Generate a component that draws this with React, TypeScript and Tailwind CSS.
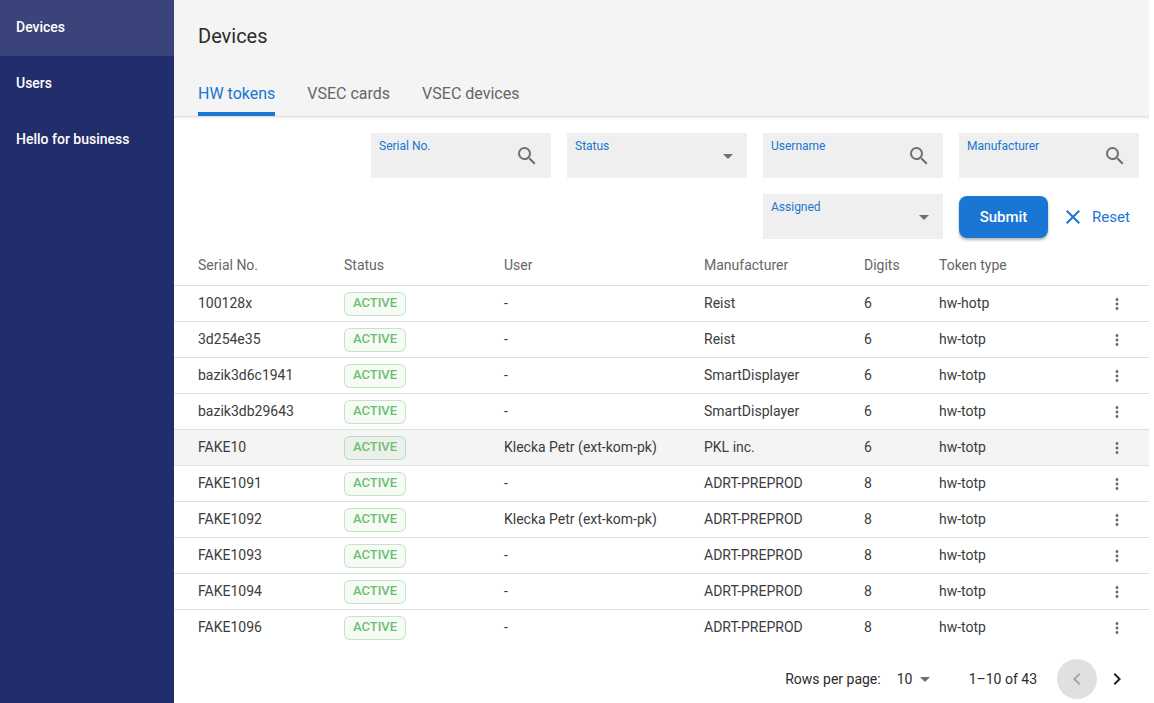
import { MdArrowDropDown, MdChevronLeft, MdChevronRight, MdClose, MdMoreVert, MdSearch } from 'react-icons/md';

type Token = {
  serial: string;
  user: string;
  manufacturer: string;
  digits: number;
  type: string;
};

const tokens: Token[] = [
  { serial: '100128x', user: '-', manufacturer: 'Reist', digits: 6, type: 'hw-hotp' },
  { serial: '3d254e35', user: '-', manufacturer: 'Reist', digits: 6, type: 'hw-totp' },
  { serial: 'bazik3d6c1941', user: '-', manufacturer: 'SmartDisplayer', digits: 6, type: 'hw-totp' },
  { serial: 'bazik3db29643', user: '-', manufacturer: 'SmartDisplayer', digits: 6, type: 'hw-totp' },
  { serial: 'FAKE10', user: 'Klecka Petr (ext-kom-pk)', manufacturer: 'PKL inc.', digits: 6, type: 'hw-totp' },
  { serial: 'FAKE1091', user: '-', manufacturer: 'ADRT-PREPROD', digits: 8, type: 'hw-totp' },
  { serial: 'FAKE1092', user: 'Klecka Petr (ext-kom-pk)', manufacturer: 'ADRT-PREPROD', digits: 8, type: 'hw-totp' },
  { serial: 'FAKE1093', user: '-', manufacturer: 'ADRT-PREPROD', digits: 8, type: 'hw-totp' },
  { serial: 'FAKE1094', user: '-', manufacturer: 'ADRT-PREPROD', digits: 8, type: 'hw-totp' },
  { serial: 'FAKE1096', user: '-', manufacturer: 'ADRT-PREPROD', digits: 8, type: 'hw-totp' },
];

const highlightedSerial = 'FAKE10';

const navItems = ['Devices', 'Users', 'Hello for business'];
const tabs = ['HW tokens', 'VSEC cards', 'VSEC devices'];

function Sidebar() {
  return (
    <nav className="w-[174px] shrink-0 bg-[#222d6b] text-sm font-medium text-white">
      <ul>
        {navItems.map((item, i) => (
          <li key={item}>
            <a href="#" className={`flex h-14 items-center px-4 pb-0.5 ${i === 0 ? 'bg-[#3a437a]' : ''}`}>
              {item}
            </a>
          </li>
        ))}
      </ul>
    </nav>
  );
}

function SearchField({ id, label }: { id: string; label: string }) {
  return (
    <div className="flex h-[45px] w-[180px] items-center bg-[#efefef] pr-3 pl-2">
      <div className="flex h-full min-w-0 flex-1 flex-col pt-1">
        <label htmlFor={id} className="text-xs leading-[18px] text-[#1976d2]">
          {label}
        </label>
        <input id={id} type="text" className="h-5 w-full bg-transparent text-sm outline-none" />
      </div>
      <button type="button" aria-label={`Search ${label}`} className="text-[#6f6f6f]">
        <MdSearch size={24} />
      </button>
    </div>
  );
}

function SelectField({ id, label }: { id: string; label: string }) {
  return (
    <div className="relative flex h-[45px] w-[180px] flex-col bg-[#efefef] px-2 pt-1">
      <label htmlFor={id} className="text-xs leading-[18px] text-[#1976d2]">
        {label}
      </label>
      <select id={id} defaultValue="" className="h-5 w-full appearance-none bg-transparent text-sm outline-none">
        <option value="" />
      </select>
      <MdArrowDropDown size={24} className="pointer-events-none absolute top-[11px] right-[7px] text-[#6f6f6f]" />
    </div>
  );
}

function Filters() {
  return (
    <form className="flex flex-wrap justify-end gap-4 px-2.5 pt-3.5 pb-[7px]" onSubmit={(e) => e.preventDefault()}>
      <SearchField id="serial" label="Serial No." />
      <SelectField id="status" label="Status" />
      <SearchField id="username" label="Username" />
      <SearchField id="manufacturer" label="Manufacturer" />
      <SelectField id="assigned" label="Assigned" />
      <div className="flex w-[180px] items-center gap-[13px]">
        <button
          type="submit"
          className="h-[42px] w-[89px] shrink-0 rounded-lg bg-[#1976d2] pt-0.5 text-[15px] font-medium text-white shadow-[0_2px_3px_rgba(0,0,0,0.3)]"
        >
          Submit
        </button>
        <button type="button" className="flex items-center gap-[7px] text-[15px] text-[#1976d2]">
          <MdClose size={24} />
          <span className="pt-0.5">Reset</span>
        </button>
      </div>
    </form>
  );
}

function TokenTable() {
  return (
    <table className="w-full table-fixed border-collapse text-sm text-[#3c3c3c]">
      <colgroup>
        <col className="w-[162px]" />
        <col className="w-[160px]" />
        <col className="w-[200px]" />
        <col className="w-[160px]" />
        <col className="w-[75px]" />
        <col />
        <col className="w-[65px]" />
      </colgroup>
      <thead>
        <tr className="h-[39px] border-b border-[#dfdfdf] text-left text-[#666666]">
          <th className="pl-6 font-normal">Serial No.</th>
          <th className="pl-2 font-normal">Status</th>
          <th className="pl-2 font-normal">User</th>
          <th className="pl-2 font-normal">Manufacturer</th>
          <th className="pl-2 font-normal">Digits</th>
          <th className="pl-2 font-normal">Token type</th>
          <th aria-label="Actions" />
        </tr>
      </thead>
      <tbody>
        {tokens.map((t) => (
          <tr
            key={t.serial}
            className={`h-9 border-b border-[#dfdfdf] last:border-b-0 ${t.serial === highlightedSerial ? 'bg-[#f4f4f4]' : ''}`}
          >
            <td className="pl-6">{t.serial}</td>
            <td className="pt-0.5 pl-2">
              <span className="flex h-6 w-[62px] items-center justify-center rounded-md border border-[#4caf50]/30 bg-[#4caf50]/5 pb-0.5 text-[13px] font-medium text-[#6cbf70]">
                ACTIVE
              </span>
            </td>
            <td className="pl-2">{t.user}</td>
            <td className="pl-2">{t.manufacturer}</td>
            <td className="pl-2">{t.digits}</td>
            <td className="pl-2">{t.type}</td>
            <td className="pt-0.5">
              <button type="button" aria-label={`Actions for ${t.serial}`} className="ml-6 flex text-[#6f6f6f]">
                <MdMoreVert size={18} />
              </button>
            </td>
          </tr>
        ))}
      </tbody>
    </table>
  );
}

function Pagination() {
  return (
    <div className="flex items-center justify-end pt-3.5 pr-3 text-sm text-[#2b2b2b]">
      <label htmlFor="rows">Rows per page:</label>
      <div className="relative ml-4 flex items-center">
        <select id="rows" defaultValue="10" className="h-6 w-10 appearance-none bg-transparent outline-none">
          <option>10</option>
          <option>25</option>
          <option>50</option>
        </select>
        <MdArrowDropDown size={24} className="pointer-events-none absolute right-0 text-[#6f6f6f]" />
      </div>
      <span className="ml-8">1–10 of 43</span>
      <button
        type="button"
        disabled
        aria-label="Previous page"
        className="ml-5 flex size-10 items-center justify-center rounded-full bg-[#e0e0e0] text-[#a6a6a6]"
      >
        <MdChevronLeft size={24} />
      </button>
      <button type="button" aria-label="Next page" className="flex size-10 items-center justify-center text-[#222222]">
        <MdChevronRight size={24} />
      </button>
    </div>
  );
}

export default function App() {
  return (
    <div className="flex min-h-screen bg-white font-['Roboto',sans-serif]">
      <Sidebar />
      <main className="min-w-0 flex-1 pr-[5px]">
        <header className="border-b-2 border-[#f4f4f4] bg-[#f4f4f4]">
          <h1 className="px-6 pt-[21px] text-xl leading-[30px] text-[#2b2b2b]">Devices</h1>
          <div role="tablist" className="mt-5 flex h-[46px] gap-8 border-b border-[#dfdfdf] px-6 text-base text-[#666666]">
            {tabs.map((tab, i) => (
              <button
                key={tab}
                type="button"
                role="tab"
                aria-selected={i === 0}
                className={`border-b-4 pt-1 ${i === 0 ? 'border-[#1976d2] text-[#1976d2]' : 'border-transparent'}`}
              >
                {tab}
              </button>
            ))}
          </div>
        </header>
        <Filters />
        <TokenTable />
        <Pagination />
      </main>
    </div>
  );
}
